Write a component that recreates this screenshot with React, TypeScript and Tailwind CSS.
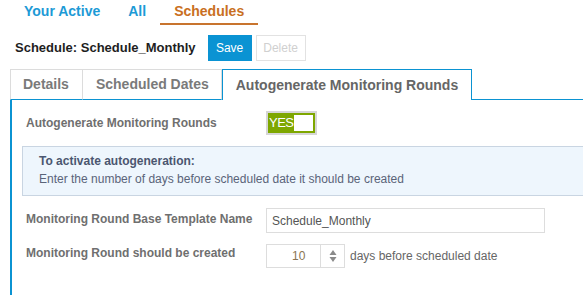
import React from "react";

export default function App() {
  const blue = "border-[#0b93d2]";
  return (
    <div className="w-[583px] h-[295px] overflow-hidden bg-white font-['Liberation_Sans',Arial,sans-serif]">
      {/* top nav */}
      <div className="flex pl-[10px]">
        <div className="px-[14px] pt-[3px] pb-[4px] leading-[16px] text-[14px] font-bold text-[#1d9ad6] border-b-2 border-transparent">
          Your Active
        </div>
        <div className="px-[14px] pt-[3px] pb-[4px] leading-[16px] text-[14px] font-bold text-[#1d9ad6] border-b-2 border-transparent">
          All
        </div>
        <div className="px-[14px] pt-[3px] pb-[4px] leading-[16px] text-[14px] font-bold text-[#c96f22] border-b-2 border-[#c8742e]">
          Schedules
        </div>
      </div>

      {/* title row */}
      <div className="flex items-center pl-[15px] mt-[10px] h-[26px]">
        <div className="text-[13px] font-bold text-[#1e1e1e] leading-[16px]">
          Schedule: Schedule_Monthly
        </div>
        <button className="ml-[12px] h-[26px] w-[44px] bg-[#0a93d3] text-white text-[12px] leading-[14px]">
          Save
        </button>
        <button className="ml-[4px] h-[26px] w-[50px] border border-[#e2e2e2] bg-white text-[#d0d0d0] text-[12px] leading-[14px]">
          Delete
        </button>
      </div>

      {/* tabs */}
      <div className="flex pl-[10px] mt-[8px] h-[31px]">
        <div className="h-[31px] pl-[12px] pr-[13px] flex items-center border-t border-l border-r border-[#dcdcdc] border-b border-b-[#0b93d2] text-[14px] font-bold text-[#7a7a7a]">
          Details
        </div>
        <div className="h-[31px] pl-[13px] pr-[12px] flex items-center border-t border-r border-[#dcdcdc] border-b border-b-[#0b93d2] text-[14px] font-bold text-[#7a7a7a]">
          Scheduled Dates
        </div>
        <div className={`h-[31px] px-[13px] flex items-center border-t border-l border-r ${blue} bg-white text-[14px] font-bold text-[#666666]`}>
          Autogenerate Monitoring Rounds
        </div>
        <div className={`flex-1 h-[31px] border-b ${blue}`} />
      </div>

      {/* panel */}
      <div className={`ml-[10px] border-l-2 ${blue} h-[200px]`}>
        <div className="flex items-center pl-[14px] pt-[11px]">
          <div className="w-[240px] text-[12px] font-bold text-[#6f6f6f] leading-[16px]">
            Autogenerate Monitoring Rounds
          </div>
          <div className="w-[51px] h-[24px] border-2 border-[#d6d6d6] bg-[#7ea700] flex items-center pl-[1px] pr-[2px]">
            <span className="text-white text-[13px] leading-[14px] tracking-[-0.5px]">YES</span>
            <div className="ml-auto w-[19px] h-[16px] bg-white" />
          </div>
        </div>

        <div className="mt-[11px] ml-[10px] border border-r-0 border-[#c9d5e2] bg-[#eef6fd] pl-[16px] pt-[5px] pb-[7px] text-[12px] leading-[18px]">
          <div className="font-bold text-[#4b5670]">To activate autogeneration:</div>
          <div className="text-[#5a6479]">Enter the number of days before scheduled date it should be created</div>
        </div>

        <div className="flex items-center pl-[14px] mt-[12px]">
          <div className="w-[240px] text-[12px] font-bold text-[#6f6f6f] leading-[16px] -mt-[3px]">
            Monitoring Round Base Template Name
          </div>
          <div className="w-[279px] h-[25px] border border-[#dddddd] flex items-center pl-[5px] text-[12px] text-[#555555]">
            Schedule_Monthly
          </div>
        </div>

        <div className="flex items-center pl-[14px] mt-[11px]">
          <div className="w-[240px] text-[12px] font-bold text-[#6f6f6f] leading-[16px] -mt-[6px]">
            Monitoring Round should be created
          </div>
          <div className="w-[79px] h-[24px] border border-[#dddddd] flex">
            <div className="w-[54px] flex items-center pl-[25px] text-[12px] text-[#8a7552] border-r border-[#dddddd]">
              10
            </div>
            <div className="flex-1 flex flex-col items-center justify-center">
              <svg width="8" height="14" viewBox="0 0 8 14">
                <path d="M4 1 L7.5 6 L0.5 6 Z" fill="#8a8a8a" />
                <path d="M4 13 L7.5 8 L0.5 8 Z" fill="#8a8a8a" />
              </svg>
            </div>
          </div>
          <div className="ml-[5px] text-[12px] text-[#666666]">days before scheduled date</div>
        </div>
      </div>
    </div>
  );
}
